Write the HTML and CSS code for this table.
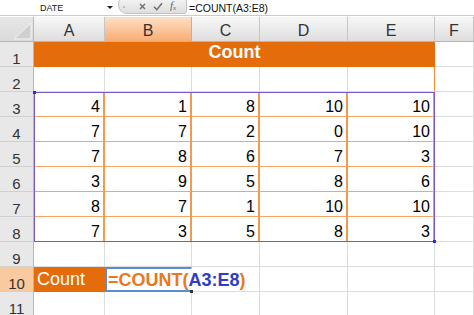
FILE: index.html
```html
<!DOCTYPE html>
<html>
<head>
<meta charset="utf-8">
<link rel="stylesheet" href="styles.css">
</head>
<body>
<div class="fbar">
  <div class="namebox">DATE</div>
  <span class="caret"></span>
  <div class="pill">
    <span class="dot"></span>
    <svg class="ico-x" width="7" height="7" viewBox="0 0 7 7"><path d="M1 1L6 6M6 1L1 6" stroke="#6f6f6f" stroke-width="1.4" fill="none"/></svg>
    <svg class="ico-ok" width="10" height="9" viewBox="0 0 10 9"><path d="M1 4.8L3.8 7.6L9 1.2" stroke="#6f6f6f" stroke-width="1.5" fill="none"/></svg>
    <span class="fx">f<sub>x</sub></span>
  </div>
  <div class="ftext">=COUNT(A3:E8)</div>
</div>

<div class="sheet">
  <div class="corner"><svg width="33" height="24" viewBox="0 0 33 24"><polygon points="31,6 31,22 14,22" fill="#cfcfcf" stroke="#f4f4f4" stroke-width="1"/></svg></div>
  <div class="ch">A</div><div class="ch sel">B</div><div class="ch">C</div><div class="ch">D</div><div class="ch">E</div><div class="ch">F</div>

  <div class="rh">1</div><div class="title">Count</div><div class="c"></div>

  <div class="rh">2</div><div class="c"></div><div class="c"></div><div class="c"></div><div class="c"></div><div class="c e2"></div><div class="c"></div>

  <div class="rh">3</div><div class="n">4</div><div class="n">1</div><div class="n">8</div><div class="n">10</div><div class="n">10</div><div class="c"></div>
  <div class="rh">4</div><div class="n">7</div><div class="n">7</div><div class="n">2</div><div class="n">0</div><div class="n">10</div><div class="c"></div>
  <div class="rh">5</div><div class="n">7</div><div class="n">8</div><div class="n">6</div><div class="n">7</div><div class="n">3</div><div class="c"></div>
  <div class="rh">6</div><div class="n">3</div><div class="n">9</div><div class="n">5</div><div class="n">8</div><div class="n">6</div><div class="c"></div>
  <div class="rh">7</div><div class="n">8</div><div class="n">7</div><div class="n">1</div><div class="n">10</div><div class="n">10</div><div class="c"></div>
  <div class="rh">8</div><div class="n">7</div><div class="n">3</div><div class="n">5</div><div class="n">8</div><div class="n">3</div><div class="c"></div>

  <div class="rh">9</div><div class="c"></div><div class="c"></div><div class="c"></div><div class="c"></div><div class="c"></div><div class="c"></div>

  <div class="rh sel">10</div>
  <div class="c label">Count</div>
  <div class="c edit"><span class="or">=COUNT(</span><span class="bl">A3:E8</span><span class="or">)</span><span class="cursor"></span><span class="handle"></span></div>
  <div class="c"></div><div class="c"></div><div class="c"></div><div class="c"></div>

  <div class="rh">11</div><div class="c"></div><div class="c"></div><div class="c"></div><div class="c"></div><div class="c"></div><div class="c"></div>

  <div class="range"><span class="knob tl"></span><span class="knob br"></span></div>
</div>
</body>
</html>
```

FILE: styles.css
```css
html, body {
  margin: 0;
  padding: 0;
  background: #ffffff;
  overflow: hidden;
}
body {
  width: 474px;
  height: 315px;
  font-family: "Liberation Sans", Arial, sans-serif;
}

/* formula bar */
.fbar {
  display: flex;
  align-items: center;
  height: 15px;
  border-bottom: 1px solid #cccccc;
  margin-bottom: 1px;
  background: #ffffff;
}
.namebox {
  width: 100px;
  box-sizing: border-box;
  padding-left: 40px;
  font-size: 9px;
  color: #222222;
}
.caret {
  margin-left: 7px;
  width: 0;
  height: 0;
  border-left: 3px solid transparent;
  border-right: 3px solid transparent;
  border-top: 3.5px solid #222222;
}
.pill {
  margin-left: 5px;
  align-self: flex-start;
  margin-top: -5px;
  width: 69px;
  height: 19px;
  box-sizing: border-box;
  padding-top: 4px;
  border: 1px solid #c2c2c2;
  border-radius: 9px 2px 3px 9px;
  background: linear-gradient(#f8f8f8, #dedede);
  display: flex;
  align-items: center;
}
.dot {
  width: 2px;
  height: 2px;
  margin-left: 4px;
  background: #b0b0b0;
  border-radius: 1px;
}
.ico-x { margin-left: 14px; }
.ico-ok { margin-left: 7px; }
.fx {
  margin-left: 7px;
  font-family: "Liberation Serif", "Times New Roman", serif;
  font-style: italic;
  font-size: 11px;
  color: #666666;
  line-height: 11px;
}
.fx sub {
  font-size: 7px;
  vertical-align: -1px;
}
.ftext {
  margin-left: 2px;
  font-size: 10.5px;
  color: #111111;
}

/* sheet grid */
.sheet {
  position: relative;
  display: grid;
  grid-template-columns: 34px 71px 87px 68px 88px 87px 39px;
  grid-template-rows: repeat(12, 25px);
}
.sheet > div {
  box-sizing: border-box;
}
.corner {
  background: linear-gradient(#e6e6e6, #dadada);
  border-right: 1px solid #b8b8b8;
  border-bottom: 1px solid #b5b5b5;
}
.corner svg { display: block; }
.ch {
  background: linear-gradient(#f7f7f7, #dedede);
  border-right: 1px solid #c6c6c6;
  border-bottom: 1px solid #b5b5b5;
  color: #333333;
  font-size: 16px;
  line-height: 16px;
  display: flex;
  justify-content: center;
  align-items: flex-end;
  padding-bottom: 2px;
}
.ch.sel {
  background: linear-gradient(#fde0c5, #f8ad74);
  border-right-color: #e9a36c;
}
.rh {
  background: #e8e8e8;
  border-right: 1px solid #b8b8b8;
  border-bottom: 1px solid #d0d0d0;
  color: #333333;
  font-size: 15px;
  line-height: 15px;
  display: flex;
  justify-content: center;
  align-items: flex-end;
  padding-bottom: 0;
}
.rh.sel {
  background: #f9c9a0;
}
.c {
  border-right: 1px solid #dadcdd;
  border-bottom: 1px solid #dadcdd;
}
.title {
  grid-column: 2 / 7;
  background: #e46c0a;
  color: #ffffff;
  font-weight: bold;
  font-size: 18px;
  line-height: 18px;
  text-align: center;
  padding-top: 1px;
}
.e2 {
  border-right-color: #f28c3c;
}
.n {
  border-right: 2px solid #f39a4f;
  border-bottom: 1px solid #f5a565;
  color: #000000;
  font-size: 16px;
  line-height: 16px;
  display: flex;
  justify-content: flex-end;
  align-items: flex-end;
  padding: 0 3px 1px 0;
}
.label {
  background: #e46c0a;
  border-color: #e46c0a;
  color: #ffffff;
  font-size: 18px;
  line-height: 18px;
  display: flex;
  align-items: flex-end;
  padding: 0 0 3px 3px;
}
.edit {
  position: relative;
  border-top: 2px solid #5b8dd0;
  border-left: 2px solid #5b8dd0;
  border-bottom: 2px solid #5b8dd0;
  border-right: 1px solid transparent;
  font-weight: bold;
  font-size: 18px;
  line-height: 18px;
  white-space: nowrap;
  display: flex;
  align-items: flex-end;
  padding: 0 0 1px 1px;
}
.or { color: #e9781f; }
.bl { color: #2f3dc6; }
.cursor {
  display: inline-block;
  width: 1px;
  height: 18px;
  margin-left: 2px;
  background: #777777;
  align-self: flex-end;
}
.handle {
  position: absolute;
  right: -2px;
  bottom: -3px;
  width: 3px;
  height: 3px;
  background: #333333;
}

/* highlighted reference range (overlay on the grid area A3:E8) */
.range {
  grid-row: 4 / 10;
  grid-column: 2 / 7;
  position: absolute;
  top: 0;
  left: 0;
  right: 0;
  bottom: 0;
  border: 1px solid #7559c9;
  pointer-events: none;
}
.knob {
  position: absolute;
  width: 3px;
  height: 3px;
  background: #2f2fd0;
}
.knob.tl { left: -2px; top: -2px; }
.knob.br { right: -2px; bottom: -2px; }
```
